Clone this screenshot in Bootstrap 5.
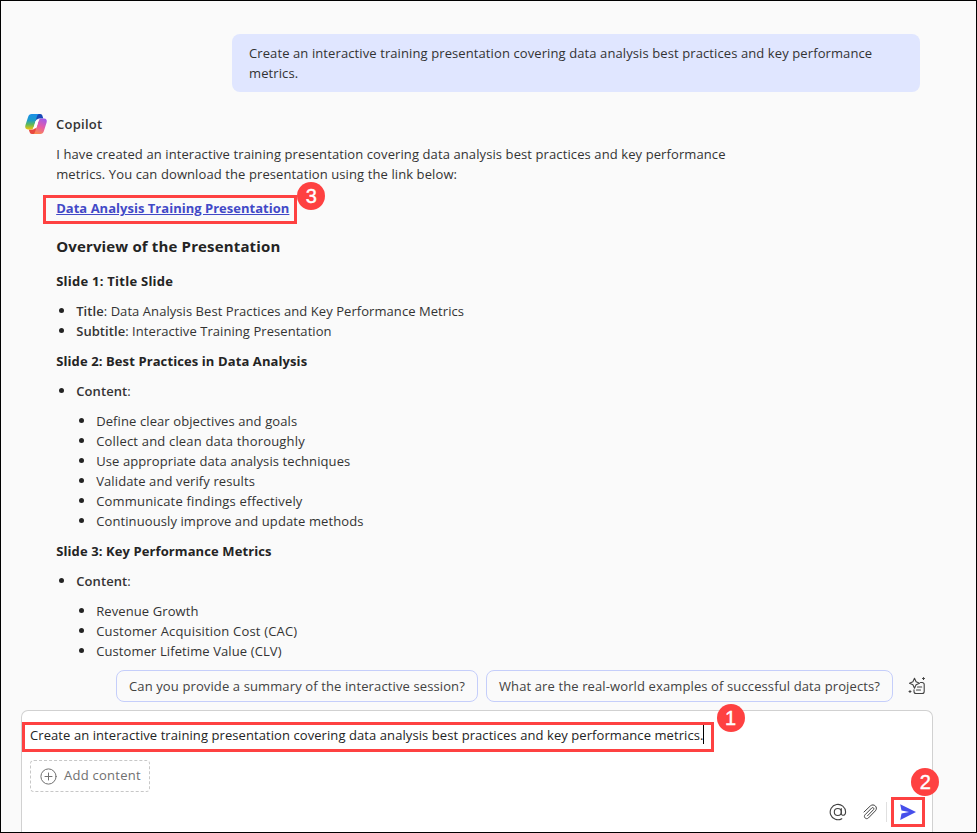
<!DOCTYPE html>
<html lang="en">
<head>
<meta charset="utf-8">
<meta name="viewport" content="width=device-width, initial-scale=1">
<title>Copilot</title>
<link href="https://cdn.jsdelivr.net/npm/bootstrap@5.3.0/dist/css/bootstrap.min.css" rel="stylesheet">
<style>
body{font-family:"Open Sans","Noto Sans",sans-serif;font-size:13px;line-height:20px;letter-spacing:.1px;color:#242424;background:#fafafa}
.frame{height:833px;border:1px solid #000;color:#333}
.thread{padding:33px 56px 0 23px;height:669px}
.bubble{width:688px;height:58px;padding:9px 16px 9px 17px;background:#e0e6ff;border-radius:8px}
.answer{padding-left:32.200px}
.who{height:24px;margin-top:20px;gap:8px;font-weight:600;letter-spacing:.25px;color:#333}
.answer p{margin:8px 0 14px}
.answer h3{font-size:15px;line-height:20px;font-weight:700;letter-spacing:.15px;color:#242424;margin:18px 0 15px}
.answer h4{font-size:13px;line-height:20px;font-weight:700;letter-spacing:.1px;color:#242424;margin:0 0 10px}
.answer h4.title-slide{letter-spacing:.25px}
.answer ul{padding-left:20px;margin:0 0 10px}
.answer ul ul{margin:10px 0}
.answer li{list-style:none;position:relative}
.answer li::before{content:"";position:absolute;left:-17.200px;top:7px;width:5px;height:5px;border-radius:50%;background:#242424}
.answer .tight{letter-spacing:.06px}
.answer .loose{letter-spacing:.18px}
.dl,.dl:hover{color:#4249c7;font-weight:700;letter-spacing:.02px}
.chips{padding-left:115px;gap:8px;height:32px}
.chip{height:32px;border:1px solid #c5cefa;border-radius:8px;padding:0 12px;line-height:31px;letter-spacing:.118px;color:#424242;white-space:nowrap}
.suggest{margin-left:6px}
.composer{margin:8px 43px 0 20px;width:912px;height:122px;background:#fff;border:1px solid #d1d1d1;border-bottom:0;border-radius:7px 7px 0 0;padding:14px 8px 0}
.typed{color:#242424;letter-spacing:.078px;height:20px}
.caret{width:1px;height:19px;background:#000}
.addbtn{width:120px;height:32px;margin-top:15px;border:1px dashed #c7c7c7;border-radius:4px;padding:0 0 2px 9px;gap:7px;color:#707070;letter-spacing:.26px;white-space:nowrap}
.addbtn svg{position:relative;top:1px}
.tools{margin-top:5px;padding-right:7px;height:30px}
.rule{width:1px;height:20px;background:#e0e0e0;margin:0 12px 0 7px}
.clip{margin-left:14px}
.hl{position:absolute;border:3px solid #fe4141}
.hl-link{left:42px;top:194px;width:254px;height:29px}
.hl-text{left:21px;top:721px;width:692px;height:30px}
.hl-send{left:890px;top:796px;width:34px;height:30px}
.num{position:absolute;width:28px;height:28px;border-radius:50%;background:#fe4141;color:#fff;font:20px/28px "Liberation Sans",sans-serif;letter-spacing:0;text-align:center;-webkit-text-stroke:.4px #fff}
.num-1{left:715.500px;top:703.400px}
.num-2{left:910.400px;top:767.400px}
.num-3{left:296.400px;top:181.400px}
</style>
</head>
<body class="overflow-hidden">
<div class="frame position-relative overflow-hidden">
<main class="thread">
<div class="d-flex justify-content-end"><div class="bubble">Create an interactive training presentation covering data analysis best practices and key performance<br>metrics.</div></div>
<div class="who d-flex align-items-center">
<svg width="24" height="24" viewBox="0 0 24 24"><defs>
<linearGradient id="ga" x1="0" y1="0" x2="0" y2="1"><stop offset="0" stop-color="#1b8fe8"/><stop offset=".4" stop-color="#1b9ccb"/><stop offset=".68" stop-color="#5fb85b"/><stop offset="1" stop-color="#f1c50b"/></linearGradient>
<linearGradient id="gb" x1=".7" y1="0" x2=".3" y2="1"><stop offset="0" stop-color="#a15ae8"/><stop offset=".5" stop-color="#e65aa6"/><stop offset="1" stop-color="#fb8a4c"/></linearGradient></defs>
<path d="M12 2h4.300c1.200 0 1.800.7 2.200 1.900l.8 2.600h-4c-1.500 0-2 .8-2.500 2.200L10 9z" fill="#1749b8"/>
<path d="M12 22H7.800c-1.200 0-1.800-.7-2.200-1.900l-.8-2.700h4c1.500 0 2-.8 2.500-2.200L14 15z" fill="#e8483f"/>
<path d="M7.800 2h7.400c-1.200 0-1.800 1-2.300 2.600l-3.100 10.100c-.5 1.700-1.200 2.700-2.900 2.700H4C1.600 17.400.7 15.600 1.400 13.300L4 5.200C4.700 3 5.700 2 7.800 2z" fill="url(#ga)"/>
<path d="M16.200 22H8.900c1.200 0 1.800-1 2.300-2.600l3.100-10.200c.5-1.700 1.200-2.700 2.900-2.700H20c2.400 0 3.300 1.800 2.600 4.100L20 18.800c-.7 2.200-1.700 3.200-3.800 3.200z" fill="url(#gb)"/>
<path d="M12.600 7.600h3c-.7.500-1 1.200-1.300 2.200l-2 6.500H8.900c.6-.5 1-1.300 1.300-2.200l1.300-4.300c.3-1 .6-1.700 1.100-2.200z" fill="#fff"/></svg>
<span>Copilot</span></div>
<div class="answer">
<p>I have created an interactive training presentation covering data analysis best practices and key performance<br>metrics. You can download the presentation using the link below:</p>
<div><a href="#" class="dl">Data Analysis Training Presentation</a></div>
<h3>Overview of the Presentation</h3>
<h4 class="title-slide">Slide 1: Title Slide</h4>
<ul class="tight"><li><b class="fw-semibold">Title</b>: Data Analysis Best Practices and Key Performance Metrics</li><li><b class="fw-semibold">Subtitle</b>: Interactive Training Presentation</li></ul>
<h4>Slide 2: Best Practices in Data Analysis</h4>
<ul><li><b class="fw-semibold">Content</b>:
<ul><li>Define clear objectives and goals</li><li class="loose">Collect and clean data thoroughly</li><li>Use appropriate data analysis techniques</li><li>Validate and verify results</li><li class="loose">Communicate findings effectively</li><li>Continuously improve and update methods</li></ul></li></ul>
<h4>Slide 3: Key Performance Metrics</h4>
<ul><li><b class="fw-semibold">Content</b>:
<ul><li>Revenue Growth</li><li class="loose">Customer Acquisition Cost (CAC)</li><li>Customer Lifetime Value (CLV)</li></ul></li></ul>
</div>
</main>
<div class="chips d-flex align-items-center"><div class="chip">Can you provide a summary of the interactive session?</div><div class="chip">What are the real-world examples of successful data projects?</div>
<svg class="suggest" width="20" height="20" viewBox="0 0 20 20" fill="none" stroke="#424242" stroke-width="1.100" stroke-linejoin="round" stroke-linecap="round"><path d="M7.500 2.200 9.100 5.700 12.500 7.200 9.100 8.700 7.500 12.200 5.900 8.700 2.500 7.200 5.900 5.700z"/><path d="M16.500 1.500v2M15.500 2.500h2M3 14.500v2M2 15.500h2M13.500 6.500h1.700a2 2 0 0 1 2 2v7a2 2 0 0 1-2 2H9a2 2 0 0 1-2-2v-1.700M10.500 11h4.200M9.500 14h4"/></svg></div>
<div class="composer"><div class="typed d-flex text-nowrap"><span>Create an interactive training presentation covering data analysis best practices and key performance metrics.</span><i class="caret"></i></div>
<div class="addbtn d-flex align-items-center"><svg width="17" height="17" viewBox="0 0 17 17" fill="none" stroke="#707070" stroke-linecap="round"><circle cx="8.500" cy="8.500" r="7.600"/><path d="M8.500 5v7M5 8.500h7"/></svg><span>Add content</span></div>
<div class="tools d-flex justify-content-end align-items-center">
<svg width="18" height="18" viewBox="0 0 18 18" fill="none" stroke="#424242" stroke-width="1.100" stroke-linecap="round"><circle cx="8.800" cy="9" r="3.500"/><path d="M12.300 5.500v4.800c0 3 4.300 2.700 4.300-1.300a7.700 7.700 0 1 0-3.800 6.700"/></svg>
<svg class="clip" width="18" height="18" viewBox="0 0 18 18" fill="none" stroke="#424242" stroke-linecap="round" stroke-linejoin="round"><path d="M3 9 9.400 2.900c3.300-2.900 8.100 1.300 5 4.900l-7 7.200c-2.300 2-5.300-.9-3.400-3.200l6.800-6.900c1.300-1 2.700.5 1.800 1.700l-6.100 6.200"/></svg>
<span class="rule"></span>
<svg width="18" height="18" viewBox="0 0 18 18"><path d="M1.200 1.200 17 9 1.200 16.900 2.500 10.500 10 9 2.500 7.500z" fill="#464feb"/></svg>
</div></div>
<div class="hl hl-link"></div><div class="hl hl-text"></div><div class="hl hl-send"></div>
<div class="num num-1">1</div><div class="num num-2">2</div><div class="num num-3">3</div>
</div>
<script src="https://cdn.jsdelivr.net/npm/bootstrap@5.3.0/dist/js/bootstrap.bundle.min.js"></script>
</body>
</html>
